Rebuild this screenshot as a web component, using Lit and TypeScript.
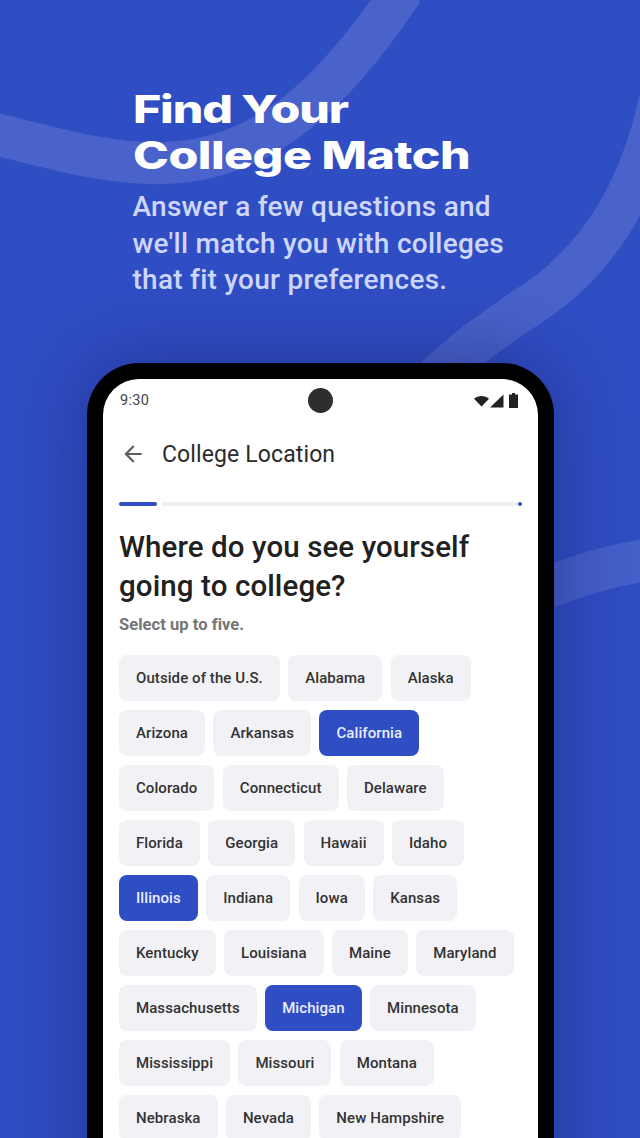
import { LitElement, html, css, svg } from "lit";
import { customElement } from "lit/decorators.js";

const ROWS: string[][] = [
  ["Outside of the U.S.", "Alabama", "Alaska"],
  ["Arizona", "Arkansas", "California"],
  ["Colorado", "Connecticut", "Delaware"],
  ["Florida", "Georgia", "Hawaii", "Idaho"],
  ["Illinois", "Indiana", "Iowa", "Kansas"],
  ["Kentucky", "Louisiana", "Maine", "Maryland"],
  ["Massachusetts", "Michigan", "Minnesota"],
  ["Mississippi", "Missouri", "Montana"],
  ["Nebraska", "Nevada", "New Hampshire"],
];
const SELECTED = new Set(["California", "Illinois", "Michigan"]);

@customElement("app-root")
export class AppRoot extends LitElement {
  static styles = css`
    :host { display: block; width: 640px; height: 1138px; overflow: hidden; position: relative; background: #304ec4; font-family: Roboto, sans-serif; }
    .waves { position: absolute; left: 0; top: 0; width: 640px; height: 1138px; }
    .content { position: relative; display: flex; flex-direction: column; }
    .hero { padding: 86px 0 0 133px; height: 363px; box-sizing: border-box; }
    h1 { margin: 0; color: #fff; font-family: Inter, sans-serif; font-weight: 800; font-size: 38px; line-height: 46px; letter-spacing: -0.4px; transform: scaleX(1.27); transform-origin: left top; white-space: nowrap; }
    .l1 { letter-spacing: -0.9px; }
    .sub { margin: 11px 0 0 -0.5px; color: #ced7fb; font-weight: 500; font-size: 28px; line-height: 36.5px; letter-spacing: 0.25px; white-space: nowrap; }
    .phone { margin-left: 87px; width: 467px; height: 900px; box-sizing: border-box; border: 16px solid #000; border-bottom: 0; border-radius: 52px 52px 0 0; background: #fff; box-shadow: 0 0 70px 10px rgba(24, 34, 110, 0.45); display: flex; flex-direction: column; overflow: hidden; }
    .status { height: 42px; flex: none; padding: 1px 20px 0 17px; box-sizing: border-box; display: flex; align-items: center; justify-content: space-between; color: #444; font-size: 14.5px; position: relative; letter-spacing: 0.3px; }
    .cam { position: absolute; left: 205px; top: 9px; width: 25px; height: 25px; border-radius: 50%; background: #2e2e2e; }
    .sicons { display: flex; align-items: center; gap: 1px; }
    .battery { margin-left: 4px; }
    .bar { height: 64px; flex: none; display: flex; align-items: center; padding: 2px 0 0 17px; gap: 16px; box-sizing: border-box; }
    .bar span { color: #2b2b2b; font-size: 23px; letter-spacing: 0.12px; }
    .progress { flex: none; margin: 17px 16px 0 16px; height: 4px; display: flex; align-items: center; }
    .p1 { width: 38px; height: 4px; border-radius: 2px; background: #304ec4; margin-right: 5px; }
    .p2 { flex: 1; height: 4px; background: #efeff1; border-radius: 2px 0 0 2px; }
    .p3 { width: 4px; height: 4px; border-radius: 50%; background: #304ec4; }
    .body { padding: 22px 16px 0 16px; }
    h2 { margin: 0; color: #212121; font-weight: 500; font-size: 29.5px; line-height: 39px; letter-spacing: 0.1px; white-space: nowrap; }
    .hint { margin: 7px 0 0; color: #757575; font-weight: 700; font-size: 16.5px; line-height: 24px; letter-spacing: 0.05px; }
    .chips { margin-top: 18px; display: flex; flex-direction: column; gap: 9px; }
    .row { display: flex; gap: 8.4px; }
    .chip { height: 46px; box-sizing: border-box; padding: 0 17px; display: flex; align-items: center; border-radius: 8px; background: #f2f2f6; color: #333; font-weight: 500; font-size: 15px; letter-spacing: 0.08px; white-space: nowrap; }
    .chip.on { background: #304ec4; color: #e9edff; }
  `;

  render() {
    return html`
      <svg class="waves" viewBox="0 0 640 1138" fill="none">
        ${svg`<path d="M-20 130 C 60 150 110 165 165 163 C 260 160 330 100 403 -10" stroke="#fff" stroke-opacity=".12" stroke-width="42"/>
        <path d="M660 100 C 640 190 600 260 530 305 C 500 325 460 352 420 392" stroke="#fff" stroke-opacity=".12" stroke-width="42"/>
        <path d="M540 590 C 580 575 610 565 660 558" stroke="#fff" stroke-opacity=".11" stroke-width="42"/>`}
      </svg>
      <div class="content">
        <div class="hero">
          <h1><span class="l1">Find Your</span><br />College Match</h1>
          <p class="sub">Answer a few questions and<br />we'll match you with colleges<br />that fit your preferences.</p>
        </div>
        <div class="phone">
          <div class="status">
            <span>9:30</span>
            <div class="cam"></div>
            <div class="sicons">
              <svg width="15" height="12" viewBox="0 0 15 12"><path d="M0 3.8 C4 0 11 0 15 3.8 L7.5 11.5Z" fill="#222"/></svg>
              <svg width="14" height="14" viewBox="0 0 14 14"><path d="M0 13.5 L13.5 0.5 V13.5Z" fill="#222"/></svg>
              <svg class="battery" width="9" height="15" viewBox="0 0 9 15"><path d="M3 0 H6 V1.5 H9 V15 H0 V1.5 H3Z" fill="#222"/></svg>
            </div>
          </div>
          <div class="bar">
            <svg width="26" height="26" viewBox="0 0 24 24"><path d="M20 11H7.8l5.6-5.6L12 4l-8 8 8 8 1.4-1.4L7.8 13H20z" fill="#5f5f5f"/></svg>
            <span>College Location</span>
          </div>
          <div class="progress"><div class="p1"></div><div class="p2"></div><div class="p3"></div></div>
          <div class="body">
            <h2>Where do you see yourself<br />going to college?</h2>
            <p class="hint">Select up to five.</p>
            <div class="chips">
              ${ROWS.map((r) => html`<div class="row">${r.map((c) => html`<div class="chip ${SELECTED.has(c) ? "on" : ""}">${c}</div>`)}</div>`)}
            </div>
          </div>
        </div>
      </div>
    `;
  }
}
